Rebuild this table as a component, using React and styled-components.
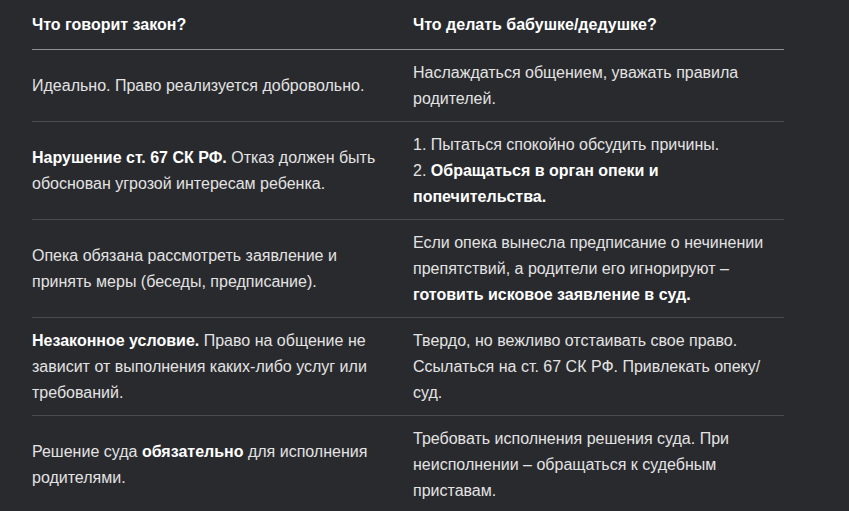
import React from "react";
import styled, { createGlobalStyle } from "styled-components";

const GlobalStyle = createGlobalStyle`
  html, body { margin: 0; padding: 0; background: #292a2e; }
  body { font-family: "Liberation Sans", Arial, sans-serif; }
`;

const Page = styled.div`
  width: 849px;
  height: 511px;
  overflow: hidden;
  background: #292a2e;
  padding: 0 65px 0 32px;
  box-sizing: border-box;
`;

const Table = styled.table`
  width: 752px;
  border-collapse: collapse;
  table-layout: fixed;
  font-size: 16px;
  line-height: 26px;
  color: #e3e3e3;
`;

const Col = styled.col`
  width: ${(p) => p.$w}px;
`;

const HeadCell = styled.th`
  text-align: left;
  font-weight: 700;
  color: #ffffff;
  padding: 12px 12px 11px ${(p) => (p.$first ? "0" : "12px")};
  border-bottom: 1px solid #8f8f92;
  vertical-align: middle;
`;

const Row = styled.tr`
  border-bottom: ${(p) => (p.$last ? "none" : "1px solid #4a4b4f")};
`;

const Cell = styled.td`
  padding: 10px 12px 9px ${(p) => (p.$first ? "0" : "12px")};
  vertical-align: middle;
`;

const B = styled.strong`
  font-weight: 700;
  color: #ffffff;
`;

const Line = styled.div``;

const rows = [
  {
    l: <>Идеально. Право реализуется добровольно.</>,
    r: <>Наслаждаться общением, уважать правила родителей.</>,
  },
  {
    l: (
      <>
        <B>Нарушение ст. 67 СК РФ.</B> Отказ должен быть обоснован угрозой интересам ребенка.
      </>
    ),
    r: (
      <>
        <Line>1. Пытаться спокойно обсудить причины.</Line>
        <Line>
          2. <B>Обращаться в орган опеки и попечительства.</B>
        </Line>
      </>
    ),
  },
  {
    l: <>Опека обязана рассмотреть заявление и принять меры (беседы, предписание).</>,
    r: (
      <>
        Если опека вынесла предписание о нечинении препятствий, а родители его игнорируют –{" "}
        <B>готовить исковое заявление в суд.</B>
      </>
    ),
  },
  {
    l: (
      <>
        <B>Незаконное условие.</B> Право на общение не зависит от выполнения каких-либо услуг или
        требований.
      </>
    ),
    r: <>Твердо, но вежливо отстаивать свое право. Ссылаться на ст. 67 СК РФ. Привлекать опеку/суд.</>,
  },
  {
    l: (
      <>
        Решение суда <B>обязательно</B> для исполнения родителями.
      </>
    ),
    r: <>Требовать исполнения решения суда. При неисполнении – обращаться к судебным приставам.</>,
  },
];

export default function App() {
  return (
    <>
      <GlobalStyle />
      <Page>
        <Table>
          <colgroup>
            <Col $w={369} />
            <Col $w={383} />
          </colgroup>
          <thead>
            <tr>
              <HeadCell $first>Что говорит закон?</HeadCell>
              <HeadCell>Что делать бабушке/дедушке?</HeadCell>
            </tr>
          </thead>
          <tbody>
            {rows.map((r, i) => (
              <Row key={i} $last={i === rows.length - 1}>
                <Cell $first>{r.l}</Cell>
                <Cell>{r.r}</Cell>
              </Row>
            ))}
          </tbody>
        </Table>
      </Page>
    </>
  );
}
